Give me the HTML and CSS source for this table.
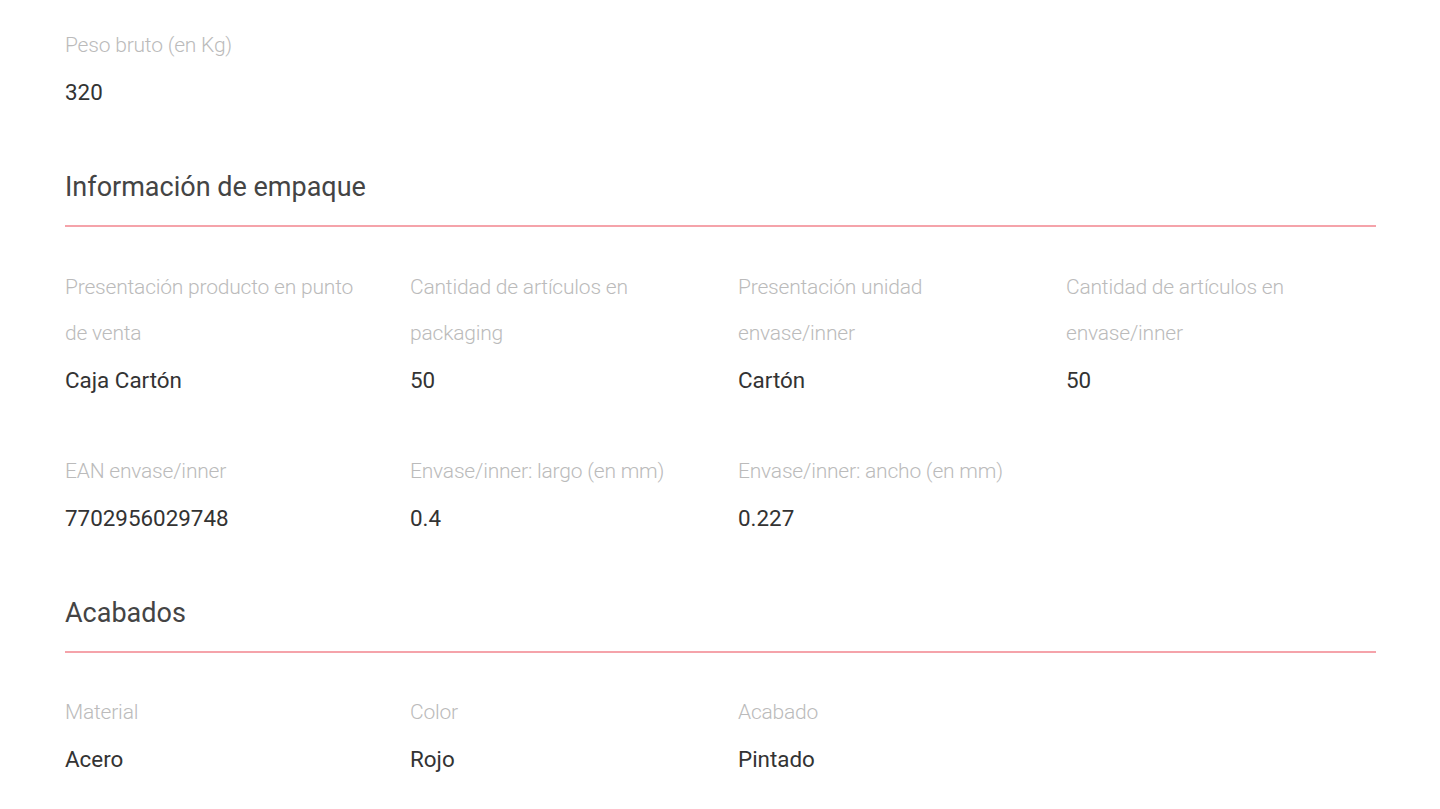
FILE: index.html
```html
<!DOCTYPE html>
<html lang="es">
<head>
<meta charset="utf-8">
<title>Detalle de producto</title>
<link rel="stylesheet" href="styles.css">
</head>
<body>
<main class="page">
  <div class="grid grid-first">
    <div class="field">
      <div class="label">Peso bruto (en Kg)</div>
      <div class="value">320</div>
    </div>
  </div>

  <h2 class="section-title">Información de empaque</h2>
  <div class="grid">
    <div class="field">
      <div class="label">Presentación producto en punto de venta</div>
      <div class="value">Caja Cartón</div>
    </div>
    <div class="field">
      <div class="label">Cantidad de artículos en packaging</div>
      <div class="value">50</div>
    </div>
    <div class="field">
      <div class="label">Presentación unidad envase/inner</div>
      <div class="value">Cartón</div>
    </div>
    <div class="field">
      <div class="label">Cantidad de artículos en envase/inner</div>
      <div class="value">50</div>
    </div>
    <div class="field">
      <div class="label">EAN envase/inner</div>
      <div class="value">7702956029748</div>
    </div>
    <div class="field">
      <div class="label">Envase/inner: largo (en mm)</div>
      <div class="value">0.4</div>
    </div>
    <div class="field">
      <div class="label">Envase/inner: ancho (en mm)</div>
      <div class="value">0.227</div>
    </div>
  </div>

  <h2 class="section-title">Acabados</h2>
  <div class="grid grid-tight">
    <div class="field">
      <div class="label">Material</div>
      <div class="value">Acero</div>
    </div>
    <div class="field">
      <div class="label">Color</div>
      <div class="value">Rojo</div>
    </div>
    <div class="field">
      <div class="label">Acabado</div>
      <div class="value">Pintado</div>
    </div>
  </div>
</main>
</body>
</html>
```

FILE: styles.css
```css
html, body {
  margin: 0;
  padding: 0;
  background: #ffffff;
}

body {
  font-family: Roboto, "Liberation Sans", sans-serif;
  color: #333333;
}

.page {
  width: 1311px;
  padding: 22px 0 0 65px;
}

.grid {
  display: grid;
  grid-template-columns: 345px 328px 328px 1fr;
  row-gap: 44px;
  margin-top: 37px;
}

.grid-first {
  margin-top: 0;
}

.grid-tight {
  margin-top: 36px;
}

.field {
  display: flex;
  flex-direction: column;
  padding-right: 40px;
}

.label {
  font-size: 21px;
  font-weight: 300;
  line-height: 46px;
  color: #bbbbbb;
  letter-spacing: -0.2px;
}

.value {
  padding-top: 1px;
  font-size: 22.4px;
  font-weight: 400;
  line-height: 47px;
  color: #333333;
}

.section-title {
  margin: 51px 0 0 0;
  padding-bottom: 18px;
  font-size: 27px;
  font-weight: 400;
  line-height: 40px;
  color: #444444;
  border-bottom: 2px solid #f5a3aa;
}
```
